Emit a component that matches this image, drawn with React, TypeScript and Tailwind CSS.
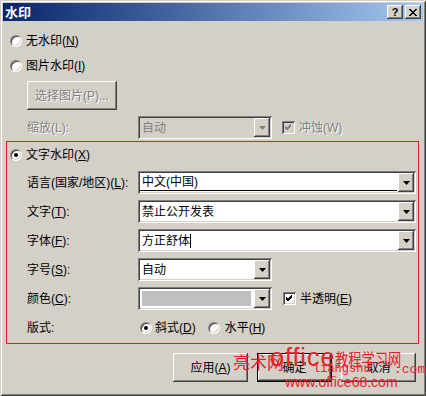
import React from "react";

const FONT = { fontFamily: '"Liberation Sans", "Noto Sans CJK SC", sans-serif' };

const raised =
  "shadow-[inset_-1px_-1px_#404040,inset_1px_1px_#ffffff,inset_-2px_-2px_#808080,inset_2px_2px_#d4d0c8]";
const sunken =
  "shadow-[inset_1px_1px_#808080,inset_-1px_-1px_#ffffff,inset_2px_2px_#404040,inset_-2px_-2px_#d4d0c8]";

function Radio({ checked }: { checked?: boolean }) {
  return (
    <div className="relative w-[12px] h-[12px] shrink-0 rounded-full bg-white border border-t-[#808080] border-l-[#808080] border-b-white border-r-white shadow-[inset_1px_1px_#404040,inset_-1px_-1px_#d4d0c8]">
      {checked && (
        <div className="absolute left-[3px] top-[3px] w-[4px] h-[4px] rounded-full bg-black" />
      )}
    </div>
  );
}

function Check({ checked, disabled }: { checked?: boolean; disabled?: boolean }) {
  return (
    <div
      className={`w-[13px] h-[13px] shrink-0 flex items-center justify-center ${sunken} ${
        disabled ? "bg-[#d4d0c8]" : "bg-white"
      }`}
    >
      {checked && (
        <svg width="7" height="7" viewBox="0 0 7 7">
          <path
            d="M0 2 L2 4 L6 0 M0 3 L2 5 L6 1 M0 4 L2 6 L6 2"
            stroke={disabled ? "#808080" : "#000"}
            strokeWidth="1"
            fill="none"
            shapeRendering="crispEdges"
          />
        </svg>
      )}
    </div>
  );
}

function Arrow({ disabled }: { disabled?: boolean }) {
  return (
    <svg width="7" height="4" viewBox="0 0 7 4">
      <path d="M0 0 H7 L3.5 4 Z" fill={disabled ? "#808080" : "#000"} />
    </svg>
  );
}

function Combo({
  w,
  value,
  disabled,
  swatch,
  cursor,
  underline,
}: {
  w: string;
  value?: string;
  disabled?: boolean;
  swatch?: boolean;
  cursor?: boolean;
  underline?: boolean;
}) {
  return (
    <div
      className={`${w} h-[23px] p-[2px] flex ${sunken} ${disabled ? "bg-[#d4d0c8]" : "bg-white"}`}
    >
      <div className="flex-1 flex items-stretch min-w-0 pr-[1px]">
        {swatch ? (
          <div className="flex-1 m-[2px] bg-[#c0c0c0]" />
        ) : (
          <div
            className={`flex-1 flex items-center pl-[2px] text-[12px] ${
              disabled ? "text-[#808080]" : "text-black"
            } ${underline ? "border-b border-black mb-[1px]" : ""}`}
          >
            {value}
            {cursor && <span className="inline-block w-[1px] h-[14px] bg-black" />}
          </div>
        )}
      </div>
      <div className={`w-[16px] bg-[#d4d0c8] flex items-center justify-center ${raised}`}>
        <Arrow disabled={disabled} />
      </div>
    </div>
  );
}

function Btn({
  children,
  focused,
  disabled,
  w = "w-[75px]",
}: {
  children: React.ReactNode;
  focused?: boolean;
  disabled?: boolean;
  w?: string;
}) {
  return (
    <div className={`${w} h-[29px] ${focused ? "border border-black" : ""} bg-[#d4d0c8]`}>
      <div
        className={`w-full h-full flex items-center justify-center text-[12px] ${raised} ${
          disabled ? "text-[#808080] [text-shadow:1px_1px_#ffffff]" : "text-black"
        }`}
      >
        {children}
      </div>
    </div>
  );
}

function Row({ label, children }: { label: React.ReactNode; children: React.ReactNode }) {
  return (
    <div className="flex items-center h-[23px] pl-[20px]">
      <div className="w-[111px] text-[12px] text-black">{label}</div>
      {children}
    </div>
  );
}

export default function App() {
  return (
    <div
      style={FONT}
      className="relative w-[426px] h-[396px] bg-[#d4d0c8] p-[3px] shadow-[inset_1px_1px_#d4d0c8,inset_-1px_-1px_#404040,inset_2px_2px_#ffffff,inset_-2px_-2px_#808080] overflow-hidden select-none"
    >
      {/* title bar */}
      <div className="h-[18px] flex items-center justify-between bg-gradient-to-r from-[#0a246a] to-[#a6caf0] pl-[2px] pr-[2px]">
        <span className="text-white font-bold text-[13px] leading-none">水印</span>
        <div className="flex gap-[2px]">
          <div className={`w-[16px] h-[14px] bg-[#d4d0c8] flex items-center justify-center text-[11px] font-bold leading-none text-black ${raised}`}>
            ?
          </div>
          <div className={`w-[16px] h-[14px] bg-[#d4d0c8] flex items-center justify-center ${raised}`}>
            <svg width="8" height="7" viewBox="0 0 8 7">
              <path d="M0 0 L7 7 M1 0 L8 7 M7 0 L0 7 M8 0 L1 7" stroke="#000" strokeWidth="1" />
            </svg>
          </div>
        </div>
      </div>

      {/* content */}
      <div className="flex flex-col">
        <div className="mt-[12px] h-[16px] flex items-center gap-[4px] pl-[7px] text-[12px] text-black">
          <Radio />
          <span>
            无水印(<u>N</u>)
          </span>
        </div>
        <div className="mt-[9px] h-[16px] flex items-center gap-[4px] pl-[7px] text-[12px] text-black">
          <Radio />
          <span>
            图片水印(<u>I</u>)
          </span>
        </div>
        <div className="mt-[7px] pl-[24px]">
          <Btn w="w-[90px]" disabled>
            选择图片(P)...
          </Btn>
        </div>
        <div className="mt-[6px] h-[23px] flex items-center pl-[24px]">
          <div className="w-[111px] text-[12px] text-[#808080] [text-shadow:1px_1px_#ffffff]">缩放(L):</div>
          <Combo w="w-[134px]" value="自动" disabled />
          <div className="ml-[10px] flex items-center gap-[4px]">
            <Check checked disabled />
            <span className="text-[12px] text-[#808080] [text-shadow:1px_1px_#ffffff]">冲蚀(W)</span>
          </div>
        </div>

        {/* red box */}
        <div className="mt-[2px] ml-[3px] w-[413px] h-[203px] border border-[#e02020] flex flex-col">
          <div className="mt-[5px] h-[16px] flex items-center gap-[4px] pl-[3px] text-[12px] text-black">
            <Radio checked />
            <span>
              文字水印(<u>X</u>)
            </span>
          </div>
          <div className="mt-[8px] flex flex-col gap-[6px]">
            <Row
              label={
                <>
                  语言(国家/地区)(<u>L</u>):
                </>
              }
            >
              <Combo w="w-[278px]" value="中文(中国)" underline />
            </Row>
            <Row
              label={
                <>
                  文字(<u>T</u>):
                </>
              }
            >
              <Combo w="w-[278px]" value="禁止公开发表" />
            </Row>
            <Row
              label={
                <>
                  字体(<u>F</u>):
                </>
              }
            >
              <Combo w="w-[278px]" value="方正舒体" cursor />
            </Row>
            <Row
              label={
                <>
                  字号(<u>S</u>):
                </>
              }
            >
              <Combo w="w-[134px]" value="自动" />
            </Row>
            <Row
              label={
                <>
                  颜色(<u>C</u>):
                </>
              }
            >
              <Combo w="w-[134px]" swatch />
              <div className="ml-[11px] flex items-center gap-[4px] text-[12px] text-black">
                <Check checked />
                <span>
                  半透明(<u>E</u>)
                </span>
              </div>
            </Row>
          </div>
          <div className="mt-[10px] h-[16px] flex items-center pl-[20px] text-[12px] text-black">
            <div className="w-[113px]">版式:</div>
            <div className="flex items-center gap-[3px]">
              <Radio checked />
              <span>
                斜式(<u>D</u>)
              </span>
            </div>
            <div className="ml-[12px] flex items-center gap-[5px]">
              <Radio />
              <span>
                水平(<u>H</u>)
              </span>
            </div>
          </div>
        </div>

        {/* buttons */}
        <div className="mt-[9px] flex justify-end gap-[9px] pr-[7px]">
          <Btn>
            应用(<u>A</u>)
          </Btn>
          <Btn focused>确定</Btn>
          <Btn>取消</Btn>
        </div>
      </div>

      {/* site watermark overlay */}
      <div className="absolute left-[233px] top-[355px] text-[17px] leading-none text-[#e8202a]">亮术网</div>
      <div className="absolute left-[270px] top-[345px] flex items-baseline leading-none text-[#e8202a]">
        <span className="text-[25px] tracking-[1px]">office</span>
        <span className="inline-block text-[17px] origin-left scale-x-[0.78] whitespace-nowrap">教程学习网</span>
      </div>
      <div
        className="absolute left-[313px] top-[363px] text-[12px] leading-none text-[#e8202a]"
        style={{ fontFamily: '"Liberation Mono", monospace' }}
      >
        liangshu
      </div>
      <div
        className="absolute left-[394px] top-[363px] text-[13px] leading-none text-[#e8202a]"
        style={{ fontFamily: '"Liberation Mono", monospace' }}
      >
        .com
      </div>
      <div className="absolute left-[285px] top-[375px] text-[14px] leading-none text-[#e8202a]">
        www.office68.com
      </div>
    </div>
  );
}
